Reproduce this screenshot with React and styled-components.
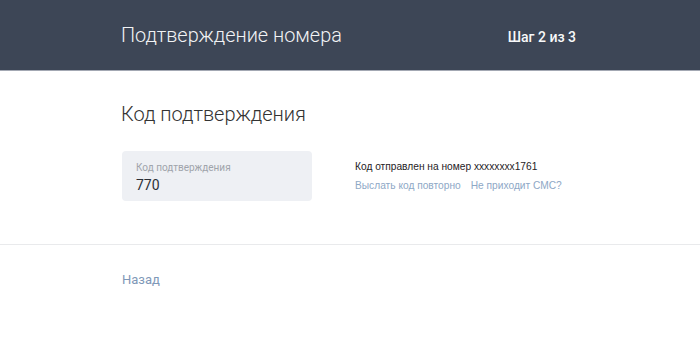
import React from "react";
import styled, { createGlobalStyle } from "styled-components";

const Global = createGlobalStyle`
  html, body { margin: 0; padding: 0; background: #fff; }
  body { font-family: Roboto, "Open Sans", sans-serif; }
`;

const Header = styled.header`
  height: 70px;
  background: #3d4656;
  border-bottom: 1px solid #a3a8b3;
  display: flex;
  align-items: center;
  padding: 0 122px 0 121px;
  justify-content: space-between;
  box-sizing: content-box;
`;

const HeaderTitle = styled.h1`
  margin: 0;
  font-weight: 300;
  font-size: 19.9px;
  color: #f2f3f5;
`;

const Step = styled.div`
  font-weight: 500;
  font-size: 14px;
  color: #f8f9fa;
  margin-top: 4px;
  margin-right: 2px;
`;

const Main = styled.main`
  padding: 31px 0 0 121px;
  height: 142px;
  border-bottom: 1px solid #e9eaec;
`;

const SectionTitle = styled.h2`
  margin: 0;
  font-weight: 300;
  font-size: 20px;
  color: #333;
  line-height: 24px;
`;

const Row = styled.div`
  display: flex;
  align-items: flex-start;
  margin-top: 25px;
`;

const Field = styled.div`
  width: 190px;
  height: 50px;
  background: #eef0f4;
  border-radius: 4px;
  margin-left: 1px;
  box-sizing: border-box;
  padding: 11px 14px 0 14px;
  display: flex;
  flex-direction: column;
`;

const FieldLabel = styled.div`
  font-size: 10px;
  color: #a0a4ab;
  line-height: 12px;
`;

const FieldValue = styled.div`
  font-size: 14px;
  font-weight: 400;
  color: #2b2f36;
  line-height: 16px;
  margin-top: 3px;
`;

const Info = styled.div`
  margin-left: 43px;
  margin-top: 9px;
  display: flex;
  flex-direction: column;
  gap: 6px;
  font-family: "Liberation Sans", Arial, sans-serif;
  font-size: 10.2px;
  line-height: 13px;
`;

const InfoText = styled.div`
  color: #1f2226;
`;

const Links = styled.div`
  display: flex;
  gap: 10px;
`;

const Link = styled.a`
  color: #8ea8c6;
  text-decoration: none;
  cursor: pointer;
`;

const Footer = styled.div`
  padding: 24px 0 0 122px;
`;

const BackLink = styled.a`
  font-size: 13px;
  color: #7f98b8;
  font-weight: 400;
  text-decoration: none;
`;

export default function App() {
  return (
    <>
      <Global />
      <Header>
        <HeaderTitle>Подтверждение номера</HeaderTitle>
        <Step>Шаг 2 из 3</Step>
      </Header>
      <Main>
        <SectionTitle>Код подтверждения</SectionTitle>
        <Row>
          <Field>
            <FieldLabel>Код подтверждения</FieldLabel>
            <FieldValue>770</FieldValue>
          </Field>
          <Info>
            <InfoText>Код отправлен на номер xxxxxxxx1761</InfoText>
            <Links>
              <Link>Выслать код повторно</Link>
              <Link>Не приходит СМС?</Link>
            </Links>
          </Info>
        </Row>
      </Main>
      <Footer>
        <BackLink>Назад</BackLink>
      </Footer>
    </>
  );
}
